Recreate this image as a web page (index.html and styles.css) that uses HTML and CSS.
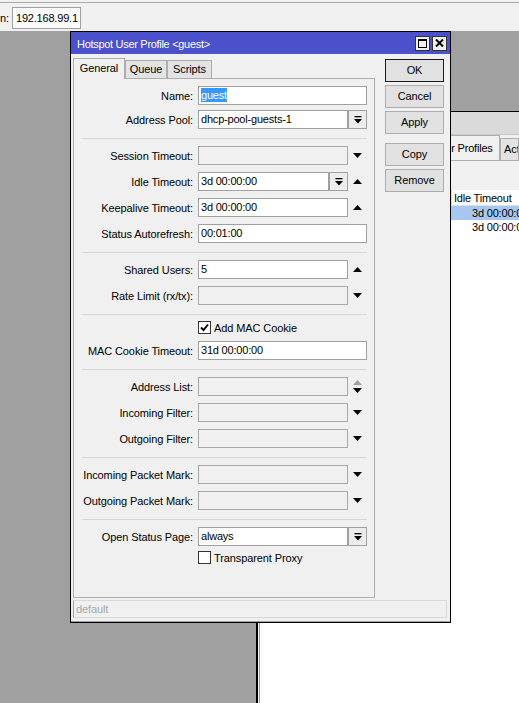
FILE: index.html
```html
<!DOCTYPE html>
<html>
<head>
<meta charset="utf-8">
<link rel="stylesheet" href="styles.css">
</head>
<body>
<div class="topbar">
  <div class="topbar-line"></div>
  <div class="topbar-row">
    <span class="tb-label">n:</span>
    <span class="tb-input">192.168.99.1</span>
  </div>
</div>

<div class="bgwin">
  <div class="bgwin-title"></div>
  <div class="bg-body">
    <div class="bg-tabs">
      <span class="bg-tab t-servers">Servers</span>
      <span class="bg-tab t-sprof">Server Profiles</span>
      <span class="bg-tab t-users">Users</span>
      <span class="bg-tab active t-uprof">User Profiles</span>
      <span class="bg-tab t-active">Active</span>
    </div>
    <div class="bg-panel"></div>
    <div class="bg-table">
      <div class="bg-row bg-head"><span class="c-name">Name</span><span class="c-idle">Idle Timeout</span></div>
      <div class="bg-row sel"><span class="c-name">default</span><span class="c-idle num">3d 00:00:00</span></div>
      <div class="bg-row"><span class="c-name">guest</span><span class="c-idle num">3d 00:00:00</span></div>
    </div>
  </div>
</div>

<div class="dialog">
  <div class="titlebar">
    <span class="title">Hotspot User Profile &lt;guest&gt;</span>
    <span class="tbtn"><svg width="9" height="9" viewBox="0 0 9 9"><rect x="0.5" y="0.5" width="8" height="8" fill="none" stroke="#000"/><rect x="0" y="0" width="9" height="2" fill="#000"/></svg></span>
    <span class="tbtn"><svg width="9" height="8" viewBox="0 0 9 8"><path d="M1 0.5L8 7.5M8 0.5L1 7.5" stroke="#000" stroke-width="2" fill="none"/></svg></span>
  </div>
  <div class="dlg-body">
    <div class="dlg-main">
      <div class="left">
        <div class="tabs">
          <span class="tab active t-gen">General</span>
          <span class="tab t-queue">Queue</span>
          <span class="tab t-scripts">Scripts</span>
        </div>
        <div class="panel">
          <div class="section tight">
            <div class="row"><span class="lbl">Name:</span><span class="inp w169"><span class="selected">guest</span></span></div>
            <div class="row"><span class="lbl">Address Pool:</span><span class="inp w150">dhcp-pool-guests-1</span><span class="dd"><svg width="8" height="8" viewBox="0 0 8 8"><rect x="0.5" y="0" width="7" height="1.3"/><path d="M0 3H8L4 7.5Z"/></svg></span></div>
          </div>
          <div class="sep"></div>
          <div class="section">
            <div class="row"><span class="lbl">Session Timeout:</span><span class="inp w150 dis"></span><span class="arr"><svg width="9" height="5" viewBox="0 0 9 5"><path d="M0 0H9L4.5 5Z"/></svg></span></div>
            <div class="row"><span class="lbl">Idle Timeout:</span><span class="inp w131">3d 00:00:00</span><span class="dd"><svg width="8" height="8" viewBox="0 0 8 8"><rect x="0.5" y="0" width="7" height="1.3"/><path d="M0 3H8L4 7.5Z"/></svg></span><span class="arr"><svg width="9" height="5" viewBox="0 0 9 5"><path d="M0 5H9L4.5 0Z"/></svg></span></div>
            <div class="row"><span class="lbl">Keepalive Timeout:</span><span class="inp w150">3d 00:00:00</span><span class="arr"><svg width="9" height="5" viewBox="0 0 9 5"><path d="M0 5H9L4.5 0Z"/></svg></span></div>
            <div class="row"><span class="lbl">Status Autorefresh:</span><span class="inp w169">00:01:00</span></div>
          </div>
          <div class="sep"></div>
          <div class="section">
            <div class="row"><span class="lbl">Shared Users:</span><span class="inp w150">5</span><span class="arr"><svg width="9" height="5" viewBox="0 0 9 5"><path d="M0 5H9L4.5 0Z"/></svg></span></div>
            <div class="row"><span class="lbl">Rate Limit (rx/tx):</span><span class="inp w150 dis"></span><span class="arr"><svg width="9" height="5" viewBox="0 0 9 5"><path d="M0 0H9L4.5 5Z"/></svg></span></div>
          </div>
          <div class="sep"></div>
          <div class="section chksec">
            <div class="chkrow"><span class="chk"><svg width="9" height="9" viewBox="0 0 9 9"><path d="M1 4.5L3.5 7L8 1.5" fill="none" stroke="#000" stroke-width="1.9"/></svg></span><span>Add MAC Cookie</span></div>
            <div class="row"><span class="lbl">MAC Cookie Timeout:</span><span class="inp w169">31d 00:00:00</span></div>
          </div>
          <div class="sep"></div>
          <div class="section">
            <div class="row"><span class="lbl">Address List:</span><span class="inp w150 dis"></span><span class="arr"><svg width="9" height="13" viewBox="0 0 9 13"><path d="M0 5H9L4.5 0Z" fill="#a0a0a0"/><path d="M0 8H9L4.5 13Z" fill="#000"/></svg></span></div>
            <div class="row"><span class="lbl">Incoming Filter:</span><span class="inp w150 dis"></span><span class="arr"><svg width="9" height="5" viewBox="0 0 9 5"><path d="M0 0H9L4.5 5Z"/></svg></span></div>
            <div class="row"><span class="lbl">Outgoing Filter:</span><span class="inp w150 dis"></span><span class="arr"><svg width="9" height="5" viewBox="0 0 9 5"><path d="M0 0H9L4.5 5Z"/></svg></span></div>
          </div>
          <div class="sep"></div>
          <div class="section">
            <div class="row"><span class="lbl">Incoming Packet Mark:</span><span class="inp w150 dis"></span><span class="arr"><svg width="9" height="5" viewBox="0 0 9 5"><path d="M0 0H9L4.5 5Z"/></svg></span></div>
            <div class="row"><span class="lbl">Outgoing Packet Mark:</span><span class="inp w150 dis"></span><span class="arr"><svg width="9" height="5" viewBox="0 0 9 5"><path d="M0 0H9L4.5 5Z"/></svg></span></div>
          </div>
          <div class="sep"></div>
          <div class="section tight">
            <div class="row"><span class="lbl">Open Status Page:</span><span class="inp w150">always</span><span class="dd"><svg width="8" height="8" viewBox="0 0 8 8"><rect x="0.5" y="0" width="7" height="1.3"/><path d="M0 3H8L4 7.5Z"/></svg></span></div>
            <div class="chkrow"><span class="chk"></span><span>Transparent Proxy</span></div>
          </div>
        </div>
      </div>
      <div class="buttons">
        <span class="btn default">OK</span>
        <span class="btn">Cancel</span>
        <span class="btn">Apply</span>
        <span class="btn gap">Copy</span>
        <span class="btn">Remove</span>
      </div>
    </div>
    <div class="statusbar">default</div>
  </div>
</div>
</body>
</html>
```

FILE: styles.css
```css
* { box-sizing: border-box; }
html, body { margin: 0; padding: 0; }
body {
  width: 519px;
  height: 703px;
  overflow: hidden;
  position: relative;
  background: #a0a0a0;
  font-family: "Liberation Sans", Arial, sans-serif;
  font-size: 11px;
  letter-spacing: -0.1px;
  color: #000;
}

/* top toolbar */
.topbar { height: 31px; background: #f0f0f0; padding-top: 2px; }
.topbar-line { height: 1px; background: #a8a8a8; }
.topbar-row { display: flex; align-items: center; padding-top: 4px; }
.tb-label { width: 12px; }
.tb-input {
  width: 69px; height: 22px;
  border: 1px solid #a0a0a0;
  background: #fbfbfb;
  padding-left: 3px;
  line-height: 20px;
  white-space: nowrap;
  letter-spacing: -0.2px;
}

/* background window */
.bgwin {
  position: absolute;
  left: 256px; top: 111px;
  width: 263px; height: 592px;
  border-left: 2px solid #000;
  border-top: 1px solid #000;
  background: #f0f0f0;
  overflow: hidden;
}
.bgwin-title { height: 23px; background: #dadada; border-bottom: 1px solid #c8c8c8; }
.bg-body { padding-left: 1px; }
.bg-tabs { display: flex; align-items: flex-end; height: 25px; position: relative; z-index: 1; overflow: hidden; }
.bg-tab {
  height: 22px;
  border: 1px solid #adadad;
  border-bottom: none;
  background: #e3e3e3;
  padding: 0 3px;
  line-height: 21px;
  white-space: nowrap;
  flex: none;
  overflow: hidden;
}
.bg-tab.active { height: 26px; line-height: 25px; background: #f0f0f0; position: relative; top: 1px; text-align: center; padding: 0; letter-spacing: -0.2px; }
.t-servers { width: 48px; }
.t-sprof { width: 78px; }
.t-users { width: 40px; }
.t-uprof { width: 75px; }
.t-active { width: 19px; }
.bg-panel { height: 30px; border-top: 1px solid #adadad; }
.bg-table { background: #fff; border-left: 1px solid #a0a0a0; height: 600px; }
.bg-row { display: flex; height: 14px; line-height: 14px; white-space: nowrap; letter-spacing: -0.2px; }
.bg-row.bg-head { height: 16px; line-height: 16px; border-bottom: 1px solid #e0e0e0; }
.bg-row.sel { background: #a6c8f0; }
.c-name { width: 192px; flex: none; padding-left: 3px; }
.bg-head .c-name { border-right: 1px solid #d8d8d8; }
.c-idle { width: 79px; flex: none; padding-left: 2px; }
.c-idle.num { text-align: right; padding-right: 3px; }

/* dialog */
.dialog {
  position: absolute;
  left: 70px; top: 31px;
  width: 381px; height: 592px;
  border: 1px solid #000;
  background: #f0f0f0;
  z-index: 2;
  box-shadow: inset 0 -1px 0 #a0a0a0;
}
.titlebar {
  height: 22px;
  background: #4b50cb;
  color: #fff;
  display: flex;
  align-items: center;
  padding: 0 3px 0 6px;
}
.title { flex: 1; white-space: nowrap; letter-spacing: -0.3px; padding-top: 1px; }
.tbtn {
  width: 15px; height: 15px;
  margin-left: 2px;
  background: #f0f0f0;
  border: 1px solid #333;
  display: flex;
  align-items: center;
  justify-content: center;
}
.dlg-body { padding: 3px 0 0 2px; }
.dlg-main { display: flex; height: 541px; }
.left { width: 302px; display: flex; flex-direction: column; }
.tabs { display: flex; align-items: flex-end; height: 21px; position: relative; z-index: 1; }
.tab {
  height: 18px;
  border: 1px solid #adadad;
  border-bottom: none;
  background: #e3e3e3;
  text-align: center;
  line-height: 17px;
  flex: none;
}
.tab.active { height: 21px; line-height: 19px; background: #f0f0f0; position: relative; top: 1px; }
.t-gen { width: 52px; }
.t-queue { width: 42px; }
.t-scripts { width: 45px; }
.panel { flex: 1; border: 1px solid #adadad; background: #f0f0f0; }

.section { display: flex; flex-direction: column; gap: 7px; padding: 7px 0 9px 0; }
.section.tight { gap: 5px; }
.section.chksec { padding-top: 6px; }
.sep { height: 1px; background: #d6d6d6; margin: 0 7px 0 8px; }
.row { display: flex; align-items: center; height: 19px; }
.lbl { width: 120px; flex: none; text-align: right; padding-right: 1px; margin-right: 4px; white-space: nowrap; }
.inp {
  height: 19px;
  flex: none;
  border: 1px solid #a0a0a0;
  background: #fff;
  padding-left: 2px;
  line-height: 17px;
  white-space: nowrap;
  overflow: hidden;
  letter-spacing: -0.2px;
}
.inp.dis { background: #f0f0f0; border-color: #a8a8a8; }
.w169 { width: 169px; }
.w150 { width: 150px; }
.w131 { width: 131px; }
.selected { display: inline-block; background: #3399ff; color: #fff; line-height: 14px; }
.dd {
  width: 19px; height: 19px;
  flex: none;
  border: 1px solid #a0a0a0;
  background: #ececec;
  display: flex;
  align-items: center;
  justify-content: center;
}
.arr { width: 19px; height: 19px; flex: none; display: flex; align-items: center; justify-content: center; }
.chkrow { display: flex; align-items: center; height: 13px; padding-left: 124px; white-space: nowrap; }
.chk {
  width: 13px; height: 13px;
  flex: none;
  border: 1px solid #333;
  background: #fff;
  margin-right: 3px;
  display: flex;
  align-items: center;
  justify-content: center;
}

.buttons { margin-left: 10px; padding-top: 2px; display: flex; flex-direction: column; gap: 3px; }
.btn {
  width: 59px; height: 23px;
  border: 1px solid #adadad;
  background: #e1e1e1;
  text-align: center;
  line-height: 21px;
}
.btn.default { border-color: #1a1a1a; }
.btn.gap { margin-top: 6px; }

.statusbar {
  margin-top: 2px;
  width: 374px; height: 18px;
  border: 1px solid #d9d9d9;
  border-left-color: #a0a0a0;
  padding-left: 2px;
  line-height: 16px;
  color: #a8a8a8;
}
```
